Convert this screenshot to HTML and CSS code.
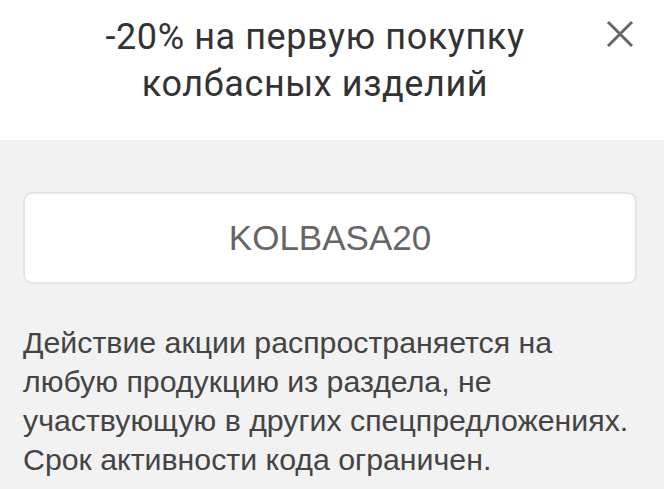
FILE: index.html
```html
<!DOCTYPE html>
<html>

<head>
    <title>Промокод</title>
    <link rel="stylesheet" href="styles.css">
</head>

<body>
    <div class="head">
        <h1 class="title">-20% на первую покупку<br>колбасных изделий</h1>
        <button class="close" type="button">
            <svg width="28" height="28" viewBox="0 0 28 28">
                <path d="M2 2L26 26M26 2L2 26" stroke="#666" stroke-width="3" fill="none" />
            </svg>
        </button>
    </div>
    <div class="content">
        <div class="code">KOLBASA20</div>
        <p class="note">Действие акции распространяется на любую продукцию из раздела, не участвующую в других спецпредложениях. Срок активности кода ограничен.</p>
    </div>
</body>

</html>
```
FILE: styles.css
```css
body {
    margin: 0;
    background-color: #f2f2f2;
    font-family: "Liberation Sans", Arial, sans-serif;
}

.head {
    background-color: white;
    height: 140px;
    padding-right: 34px;
    display: flex;
    justify-content: center;
    position: relative;
}

.title {
    margin: 0;
    padding-top: 14px;
    font-family: Roboto, sans-serif;
    font-weight: 400;
    font-size: 36px;
    line-height: 47px;
    letter-spacing: 0.6px;
    color: #333;
    text-align: center;
}

.close {
    position: absolute;
    top: 20px;
    right: 30px;
    padding: 0;
    border: none;
    background: none;
}

.content {
    padding: 52px 27px 0 23px;
}

.code {
    height: 88px;
    display: flex;
    align-items: center;
    justify-content: center;
    background-color: white;
    border: 2px solid #e4e4e4;
    border-radius: 9px;
    font-size: 35px;
    color: #666;
}

.note {
    margin: 39px 0 0;
    font-size: 30.3px;
    line-height: 39px;
    color: #444;
}
```
